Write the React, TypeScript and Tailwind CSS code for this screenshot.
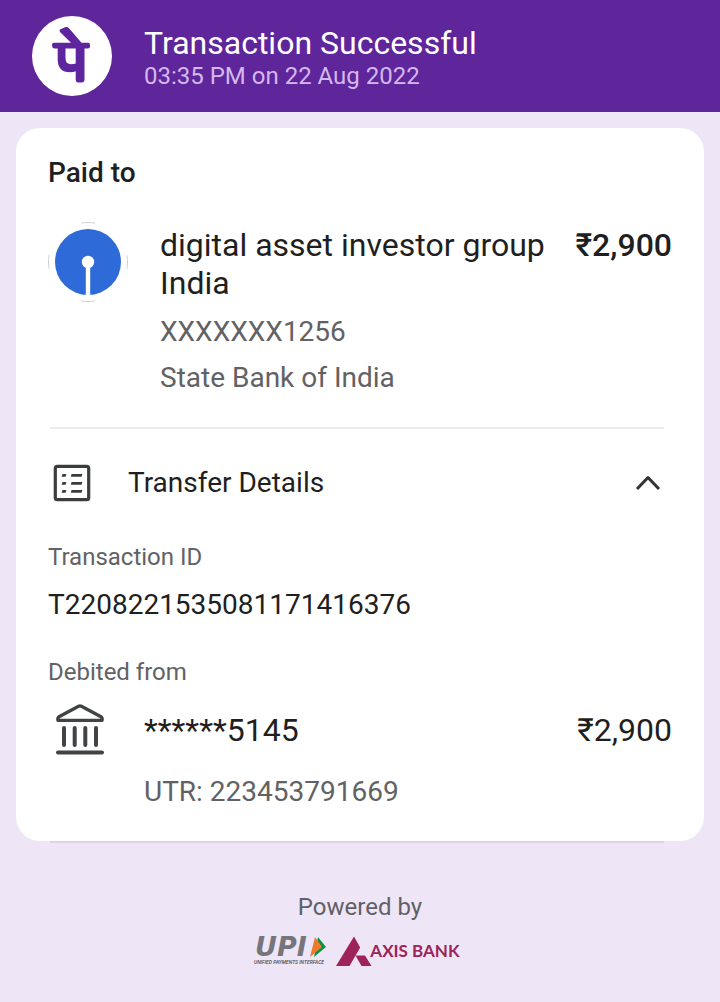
import { useState } from "react";

function PhonePeLogo() {
  return (
    <svg viewBox="0 0 80 80" className="size-20 shrink-0" role="img" aria-label="PhonePe">
      <circle cx="40" cy="40" r="40" fill="#fff" />
      <path
        fill="#5f259f"
        fillRule="evenodd"
        d="M28 13.5 L33 11.2 Q35.5 10.4 37 12.2 L49.5 26.8 H56 Q58 26.8 58 28.8 V30.5 Q58 32.5 56 32.5 H52.500 V64 Q52.500 66.4 50 66.4 H46 Q43.700 66.4 43.700 64 V55.2 Q41.5 56.2 38 56.2 Q25.7 56.2 25.7 43.5 V32.5 H22.5 Q20.5 32.5 20.2 30.5 L20 28.4 Q20 26.8 22 26.8 H39 L28 16 Q27 14.4 28 13.5 Z M33.500 32.5 V42 Q33.500 48.2 39 48.2 Q41.8 48.2 43.700 47.4 V32.5 Z"
      />
    </svg>
  );
}

function SbiLogo() {
  return (
    <svg viewBox="0 0 80 80" className="size-20 shrink-0" role="img" aria-label="State Bank of India">
      <circle cx="40" cy="40" r="39.5" fill="none" stroke="#cfcfcf" strokeWidth="1" strokeDasharray="14 48.05" strokeDashoffset="7" />
      <circle cx="40" cy="40" r="33" fill="#2f6bd8" />
      <circle cx="40" cy="40" r="6.2" fill="#fff" />
      <path d="M40 40V75" stroke="#fff" strokeWidth="4.4" />
    </svg>
  );
}

function ListIcon() {
  return (
    <svg viewBox="0 0 48 48" className="size-12 shrink-0" fill="none" stroke="#3a3c3e" aria-hidden="true">
      <rect x="7.3" y="7.3" width="33.4" height="33.4" rx="2" strokeWidth="3.2" />
      <path d="M13.600 17.800h4l.8-2.800h-4ZM22.800 17.800h10.800l.8-2.800H23.600ZM13.600 25.800h4l.8-2.800h-4ZM22.800 25.800h10.800l.8-2.800H23.600ZM13.600 33.800h4l.8-2.800h-4ZM22.800 33.800h10.800l.8-2.800H23.600Z" fill="#3a3c3e" stroke="none" />
    </svg>
  );
}

function BankIcon() {
  return (
    <svg viewBox="0 0 64 64" className="size-16 shrink-0" fill="none" stroke="#414345" strokeLinecap="round" strokeLinejoin="round" aria-hidden="true">
      <path d="M30.6 8.3Q32 7.6 33.4 8.3L53 18.7Q54.6 20 54 22.4H10Q9.400 20 11 18.700Z" strokeWidth="3.4" />
      <path d="M16 30v17M26.700 30v17M37.300 30v17M48 30v17" strokeWidth="4" />
      <path d="M10 54.500h44" strokeWidth="4" />
    </svg>
  );
}

function UpiLogo() {
  return (
    <svg viewBox="0 -8 78 40" className="h-10 w-[78px] shrink-0" role="img" aria-label="UPI, Unified Payments Interface">
      <text x="3" y="21" fill="#77757c" fontFamily="DejaVu Sans" fontSize="27" fontWeight="700" fontStyle="oblique">
        UPI
      </text>
      <path d="M66 2L74 12L62 22Z" fill="#0d9045" />
      <path d="M63 2L70 12L58 22Z" fill="#ee7b2c" />
      <text x="2" y="29" fill="#4c4951" fontFamily="Roboto" fontSize="5" fontWeight="500" fontStyle="italic">
        UNIFIED PAYMENTS INTERFACE
      </text>
    </svg>
  );
}

function AxisLogo() {
  return (
    <div className="flex items-center text-[#9d2359]">
      <svg viewBox="0 0 36 32" className="h-8 w-9 shrink-0" fill="currentColor" aria-hidden="true">
        <path d="M18 1.500L24.200 12.500L13.500 31H0Z" />
        <path d="M19.500 20.500H29L35.500 31H25.500Z" />
      </svg>
      <span className="-ml-0.5 font-[Lato] text-[17px] leading-6 font-bold">AXIS BANK</span>
    </div>
  );
}

export default function App() {
  const [open, setOpen] = useState(true);
  return (
    <div className="min-h-screen bg-[#eee6f7] font-[Roboto,sans-serif] text-[#1f1f21]">
      <header className="flex items-center gap-8 bg-[#5f259b] px-8 py-4">
        <PhonePeLogo />
        <div className="pt-1">
          <h1 className="text-[32px] leading-9 text-white">Transaction Successful</h1>
          <p className="text-2xl leading-[30px] text-[#d3b8ef]">03:35 PM on 22 Aug 2022</p>
        </div>
      </header>

      <main className="mx-4 mt-4 rounded-3xl bg-white px-8 pt-6 pb-[29px]">
        <h2 className="text-[28px] leading-[42px] font-medium">Paid to</h2>

        <section className="mt-7 flex items-start">
          <SbiLogo />
          <div className="ml-8 flex-1">
            <div className="flex items-start justify-between gap-4 pt-1 text-[32px] leading-[38px]">
              <p>digital asset investor group India</p>
              <p className="font-medium">₹2,900</p>
            </div>
            <p className="mt-[7px] text-[28px] leading-[46px] text-[#626264]">XXXXXXX1256</p>
            <p className="text-[28px] leading-[46px] text-[#626264]">State Bank of India</p>
          </div>
        </section>

        <hr className="mt-[26px] mr-2 ml-0.5 border-t-2 border-[#ececec]" />

        <button
          type="button"
          aria-expanded={open}
          onClick={() => setOpen(!open)}
          className="mt-[30px] flex w-full items-center gap-8 pr-2 text-left"
        >
          <ListIcon />
          <span className="flex-1 text-[28px] leading-12">Transfer Details</span>
          <svg viewBox="0 0 32 32" className={open ? "size-8" : "size-8 rotate-180"} fill="none" stroke="#303234" strokeWidth="3" strokeLinejoin="round" aria-hidden="true">
            <path d="M5 22L16 10.500L27 22" />
          </svg>
        </button>

        {open && (
          <section>
            <p className="mt-8 text-2xl leading-9 text-[#626264]">Transaction ID</p>
            <p className="mt-1.5 text-[28px] leading-12">T2208221535081171416376</p>
            <p className="mt-[25px] text-2xl leading-9 text-[#626264]">Debited from</p>
            <div className="mt-2 flex items-center text-[32px] leading-10">
              <BankIcon />
              <p className="ml-8 flex-1">******5145</p>
              <p>₹2,900</p>
            </div>
            <p className="mt-2.5 ml-24 text-[28px] leading-10 text-[#626264]">UTR: 223453791669</p>
          </section>
        )}
      </main>
      <hr className="mr-14 ml-[50px] border-t-2 border-[#ddd4e7]" />

      <footer className="mt-11 flex flex-col items-center pb-8">
        <p className="text-2xl leading-10 text-[#626066]">Powered by</p>
        <div className="flex items-end gap-1.5 pr-2">
          <UpiLogo />
          <AxisLogo />
        </div>
      </footer>
    </div>
  );
}
